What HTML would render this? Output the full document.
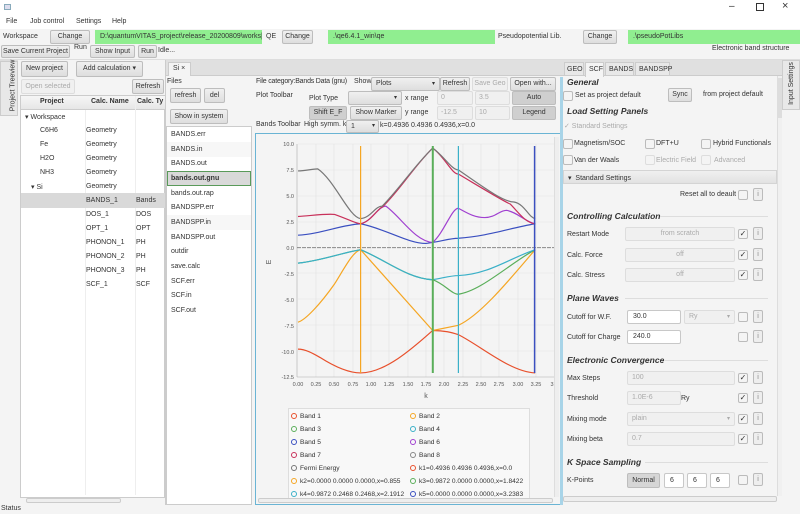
<!DOCTYPE html>
<html><head><meta charset="utf-8"><style>
*{box-sizing:border-box;margin:0;padding:0}
body{width:800px;height:514px;overflow:hidden;background:#f4f4f4;font-family:"Liberation Sans",sans-serif;font-size:7px;color:#333;position:relative}
.a{position:absolute;white-space:nowrap}
.b{position:absolute;background:linear-gradient(#f0f0f0,#dedede);border:1px solid #bdbdbd;border-radius:2px;text-align:center;white-space:nowrap;color:#333}
.g{position:absolute;background:#90ee90;padding-left:5px;white-space:nowrap}
.in{position:absolute;background:#fff;border:1px solid #c8c8c8;border-radius:2px;padding-left:5px;white-space:nowrap}
.dis{position:absolute;background:#f0f0f0;border:1px solid #ddd;border-radius:2px;color:#aaa;text-align:center;white-space:nowrap}
.cb{position:absolute;width:10px;height:10px;border:1px solid #bbb;border-radius:2px;background:#f4f4f4;font-size:8px;line-height:8px;text-align:center;color:#333}
.ib{position:absolute;width:10px;height:13px;border:1px solid #bbb;border-radius:2px;background:#eee;font-size:7px;line-height:11px;text-align:center;color:#888}
.h{position:absolute;font-weight:bold;font-style:italic;font-size:8.5px;color:#333;white-space:nowrap}
.hl{position:absolute;height:1px;background:#ddd}
.lg{position:absolute;white-space:nowrap;font-size:6.6px}
.lg i{display:inline-block;width:6px;height:6px;border:1.3px solid;border-radius:50%;margin-right:3px;vertical-align:-1px}
</style></head><body>
<div class="a" style="left:0;top:0;width:800px;height:16px;background:#fff"></div>
<div class="a" style="left:4px;top:4px;width:7px;height:6px;border:1px solid #8ab;background:#dde"></div>
<div class="a" style="left:729px;top:1px;font-size:10px;color:#333">–</div>
<div class="a" style="left:756px;top:3px;width:8px;height:8px;border:1px solid #333"></div>
<div class="a" style="left:782px;top:0px;font-size:11px;color:#333">×</div>
<div class="a" style="left:0;top:16px;width:800px;height:13px;background:#fff"></div>
<div class="a" style="left:6px;top:18px">File</div>
<div class="a" style="left:30px;top:18px">Job control</div>
<div class="a" style="left:76px;top:18px">Settings</div>
<div class="a" style="left:112px;top:18px">Help</div>
<div class="a" style="left:3px;top:33px">Workspace</div>
<div class="b" style="left:50px;top:30px;width:40px;height:14px;line-height:12px">Change</div>
<div class="g" style="left:95px;top:30px;width:167px;height:14px;line-height:14px;overflow:hidden">D:\quantumVITAS_project\release_20200809\works|</div>
<div class="a" style="left:266px;top:33px">QE</div>
<div class="b" style="left:282px;top:30px;width:31px;height:14px;line-height:12px">Change</div>
<div class="g" style="left:328px;top:30px;width:167px;height:14px;line-height:14px">.\qe6.4.1_win\qe</div>
<div class="a" style="left:498px;top:33px">Pseudopotential Lib.</div>
<div class="b" style="left:583px;top:30px;width:34px;height:14px;line-height:12px">Change</div>
<div class="g" style="left:628px;top:30px;width:172px;height:14px;line-height:14px">.\pseudoPotLibs</div>
<div class="b" style="left:1px;top:45px;width:69px;height:13px;line-height:11px">Save Current Project</div>
<div class="a" style="left:74px;top:44px">Run</div>
<div class="b" style="left:90px;top:45px;width:45px;height:13px;line-height:11px">Show Input</div>
<div class="b" style="left:138px;top:45px;width:19px;height:13px;line-height:11px">Run</div>
<div class="a" style="left:158px;top:47px">Idle...</div>
<div class="a" style="left:712px;top:45px">Electronic band structure</div>
<div class="a" style="left:0;top:59px;width:800px;height:2px;background:#ddd"></div>
<div class="a" style="left:0;top:61px;width:18px;height:55px;background:#e8e8e8;border:1px solid #ccc"></div>
<div class="a" style="left:-13px;top:82px;transform:rotate(-90deg);font-size:7px">Project Treeview</div>
<div class="a" style="left:18px;top:60px;width:148px;height:445px;background:#f4f4f4;border-right:1px solid #ccc"></div>
<div class="b" style="left:21px;top:61px;width:47px;height:16px;line-height:14px">New project</div>
<div class="b" style="left:76px;top:61px;width:67px;height:16px;line-height:14px">Add calculation ▾</div>
<div class="dis" style="left:21px;top:79px;width:54px;height:15px;line-height:13px">Open selected</div>
<div class="b" style="left:132px;top:79px;width:32px;height:15px;line-height:13px">Refresh</div>
<div class="a" style="left:20px;top:95px;width:145px;height:403px;background:#fff;border:1px solid #ccc"></div>
<div class="a" style="left:21px;top:96px;width:144px;height:14px;background:linear-gradient(#f6f6f6,#e6e6e6);border-bottom:1px solid #ccc"></div>
<div class="a" style="left:40px;top:98px;font-weight:bold">Project</div>
<div class="a" style="left:91px;top:98px;font-weight:bold">Calc. Name</div>
<div class="a" style="left:137px;top:98px;font-weight:bold">Calc. Ty</div>
<div class="a" style="left:85px;top:110px;width:1px;height:385px;background:#eee"></div>
<div class="a" style="left:135px;top:96px;width:1px;height:399px;background:#eee"></div>
<div class="a" style="left:21px;top:193px;width:144px;height:15px;background:#d9d9d9"></div>
<div class="a" style="left:25px;top:113px">▾ Workspace</div>
<div class="a" style="left:40px;top:127px">C6H6</div><div class="a" style="left:86px;top:127px">Geometry</div>
<div class="a" style="left:40px;top:141px">Fe</div><div class="a" style="left:86px;top:141px">Geometry</div>
<div class="a" style="left:40px;top:155px">H2O</div><div class="a" style="left:86px;top:155px">Geometry</div>
<div class="a" style="left:40px;top:169px">NH3</div><div class="a" style="left:86px;top:169px">Geometry</div>
<div class="a" style="left:31px;top:183px">▾ Si</div><div class="a" style="left:86px;top:183px">Geometry</div>
<div class="a" style="left:86px;top:197px">BANDS_1</div><div class="a" style="left:136px;top:197px">Bands</div>
<div class="a" style="left:86px;top:211px">DOS_1</div><div class="a" style="left:136px;top:211px">DOS</div>
<div class="a" style="left:86px;top:225px">OPT_1</div><div class="a" style="left:136px;top:225px">OPT</div>
<div class="a" style="left:86px;top:239px">PHONON_1</div><div class="a" style="left:136px;top:239px">PH</div>
<div class="a" style="left:86px;top:253px">PHONON_2</div><div class="a" style="left:136px;top:253px">PH</div>
<div class="a" style="left:86px;top:267px">PHONON_3</div><div class="a" style="left:136px;top:267px">PH</div>
<div class="a" style="left:86px;top:281px">SCF_1</div><div class="a" style="left:136px;top:281px">SCF</div>
<div class="a" style="left:26px;top:498px;width:95px;height:5px;border:1px solid #ccc;border-radius:2px;background:#eee"></div>
<div class="a" style="left:166px;top:60px;width:394px;height:16px;background:#e0e0e0;border-bottom:1px solid #ccc"></div>
<div class="a" style="left:168px;top:62px;width:23px;height:14px;background:#f4f4f4;border:1px solid #ccc;border-bottom:none;padding:2px 0 0 4px">Si ×</div>
<div class="a" style="left:167px;top:78px">Files</div>
<div class="b" style="left:170px;top:88px;width:31px;height:15px;line-height:13px">refresh</div>
<div class="b" style="left:204px;top:88px;width:21px;height:15px;line-height:13px">del</div>
<div class="b" style="left:170px;top:109px;width:58px;height:15px;line-height:13px">Show in system</div>
<div class="a" style="left:166px;top:126px;width:86px;height:379px;background:#fff;border:1px solid #ccc"></div>
<div class="a" style="left:171px;top:131px">BANDS.err</div>
<div class="a" style="left:167px;top:142px;width:84px;height:15px;background:#f7f7f7"></div>
<div class="a" style="left:171px;top:146px">BANDS.in</div>
<div class="a" style="left:171px;top:160px">BANDS.out</div>
<div class="a" style="left:167px;top:171px;width:84px;height:15px;background:#d9d9d9;border:1px solid #5a9a5a"></div>
<div class="a" style="left:171px;top:175px;font-weight:bold">bands.out.gnu</div>
<div class="a" style="left:171px;top:190px">bands.out.rap</div>
<div class="a" style="left:171px;top:204px">BANDSPP.err</div>
<div class="a" style="left:167px;top:215px;width:84px;height:15px;background:#f7f7f7"></div>
<div class="a" style="left:171px;top:219px">BANDSPP.in</div>
<div class="a" style="left:171px;top:234px">BANDSPP.out</div>
<div class="a" style="left:171px;top:248px">outdir</div>
<div class="a" style="left:171px;top:263px">save.calc</div>
<div class="a" style="left:171px;top:278px">SCF.err</div>
<div class="a" style="left:171px;top:292px">SCF.in</div>
<div class="a" style="left:171px;top:307px">SCF.out</div>
<div class="a" style="left:256px;top:78px;letter-spacing:-0.2px">File category:Bands Data (gnu)</div>
<div class="a" style="left:354px;top:78px">Show</div>
<div class="b" style="left:371px;top:77px;width:69px;height:14px;line-height:12px;text-align:left;padding-left:4px">Plots<span style="float:right;margin-right:4px;font-size:6px">▾</span></div>
<div class="b" style="left:440px;top:77px;width:30px;height:14px;line-height:12px">Refresh</div>
<div class="dis" style="left:472px;top:77px;width:36px;height:14px;line-height:12px">Save Geo</div>
<div class="b" style="left:510px;top:77px;width:46px;height:14px;line-height:12px">Open with...</div>
<div class="a" style="left:256px;top:92px">Plot Toolbar</div>
<div class="a" style="left:309px;top:95px">Plot Type</div>
<div class="b" style="left:348px;top:91px;width:54px;height:14px;line-height:12px;text-align:right;padding-right:4px;font-size:6px">▾</div>
<div class="a" style="left:405px;top:95px">x range</div>
<div class="dis" style="left:437px;top:91px;width:36px;height:14px;line-height:12px;text-align:left;padding-left:3px">0</div>
<div class="dis" style="left:475px;top:91px;width:35px;height:14px;line-height:12px;text-align:left;padding-left:3px">3.5</div>
<div class="b" style="left:512px;top:91px;width:44px;height:14px;line-height:12px;background:#cfcfcf">Auto</div>
<div class="b" style="left:309px;top:106px;width:38px;height:14px;line-height:12px;background:#cfcfcf">Shift E_F</div>
<div class="b" style="left:350px;top:106px;width:52px;height:14px;line-height:12px">Show Marker</div>
<div class="a" style="left:405px;top:109px">y range</div>
<div class="dis" style="left:437px;top:106px;width:36px;height:14px;line-height:12px;text-align:left;padding-left:3px">-12.5</div>
<div class="dis" style="left:475px;top:106px;width:35px;height:14px;line-height:12px;text-align:left;padding-left:3px">10</div>
<div class="b" style="left:512px;top:106px;width:44px;height:14px;line-height:12px;background:#cfcfcf">Legend</div>
<div class="a" style="left:256px;top:121px">Bands Toolbar</div>
<div class="a" style="left:304px;top:121px">High symm. k</div>
<div class="b" style="left:346px;top:120px;width:33px;height:13px;line-height:11px;text-align:left;padding-left:4px">1<span style="float:right;margin-right:3px;font-size:6px">▾</span></div>
<div class="a" style="left:380px;top:122px">k=0.4936 0.4936 0.4936,x=0.0</div>
<div class="a" style="left:255px;top:133px;width:306px;height:372px;background:#f4f4f4;border:1px solid #6ab4d4"></div>
<svg class="a" style="left:0;top:0" width="800" height="514">
<g stroke="#e2e2e2" stroke-width="0.6">
<line x1="298" y1="144" x2="555" y2="144"/><line x1="298" y1="170" x2="555" y2="170"/><line x1="298" y1="196" x2="555" y2="196"/><line x1="298" y1="222" x2="555" y2="222"/><line x1="298" y1="273" x2="555" y2="273"/><line x1="298" y1="299" x2="555" y2="299"/><line x1="298" y1="325" x2="555" y2="325"/><line x1="298" y1="351" x2="555" y2="351"/>
<line x1="316" y1="144" x2="316" y2="377"/><line x1="334" y1="144" x2="334" y2="377"/><line x1="353" y1="144" x2="353" y2="377"/><line x1="371" y1="144" x2="371" y2="377"/><line x1="389" y1="144" x2="389" y2="377"/><line x1="408" y1="144" x2="408" y2="377"/><line x1="426" y1="144" x2="426" y2="377"/><line x1="444" y1="144" x2="444" y2="377"/><line x1="463" y1="144" x2="463" y2="377"/><line x1="481" y1="144" x2="481" y2="377"/><line x1="499" y1="144" x2="499" y2="377"/><line x1="518" y1="144" x2="518" y2="377"/><line x1="536" y1="144" x2="536" y2="377"/>
</g>
<line x1="297" y1="144" x2="297" y2="377" stroke="#aaa" stroke-width="0.6"/>
<line x1="297" y1="377" x2="555" y2="377" stroke="#aaa" stroke-width="0.6"/>
<g font-size="5.5" fill="#555" font-family="Liberation Sans" text-anchor="end">
<text x="294" y="146">10.0</text><text x="294" y="172">7.5</text><text x="294" y="198">5.0</text><text x="294" y="224">2.5</text><text x="294" y="250">0.0</text><text x="294" y="276">-2.5</text><text x="294" y="302">-5.0</text><text x="294" y="328">-7.5</text><text x="294" y="354">-10.0</text><text x="294" y="379">-12.5</text>
</g>
<g font-size="5.5" fill="#555" font-family="Liberation Sans" text-anchor="middle">
<text x="298" y="386">0.00</text><text x="316" y="386">0.25</text><text x="334" y="386">0.50</text><text x="353" y="386">0.75</text><text x="371" y="386">1.00</text><text x="389" y="386">1.25</text><text x="408" y="386">1.50</text><text x="426" y="386">1.75</text><text x="444" y="386">2.00</text><text x="463" y="386">2.25</text><text x="481" y="386">2.50</text><text x="499" y="386">2.75</text><text x="518" y="386">3.00</text><text x="536" y="386">3.25</text><text x="552" y="386">3</text>
<text x="426" y="398" font-size="7">k</text>
<text x="271" y="262" font-size="7" transform="rotate(-90 271 262)">E</text>
</g>
<line x1="297" y1="247.6" x2="555" y2="247.6" stroke="#888" stroke-width="1" stroke-dasharray="4 1"/>
<g fill="none" stroke-width="1.2" stroke-linejoin="round" transform="translate(298 247.6) scale(73.2 -10.36)">
<path vector-effect="non-scaling-stroke" stroke="#e8502c" d="M0-9.8 C.1-9.8 .2-10.2 .3-10.6 C.5-11.5 .7-12.1 .855-12.1 C1.2-12.1 1.6-9.5 1.84-8.0 C2.0-8.0 2.1-8.2 2.19-8.4 C2.5-9.5 2.9-12.0 3.24-12.1"/>
<path vector-effect="non-scaling-stroke" stroke="#f5a623" d="M0-7.2 C.1-7.0 .3-5.5 .5-3.5 C.65-1.8 .75-.4 .855-.2 L1.84-8.0 L2.19-7.5 C2.5-6.5 2.9-3 3.24-.2"/>
<path vector-effect="non-scaling-stroke" stroke="#5aae5a" d="M0-1.5 C.3-1.3 .6-.5 .855-.2 C1.2-1.2 1.5-3 1.84-3.1 C2.0-3.5 2.1-4.5 2.19-4.5 C2.5-4.2 2.9-1.5 3.24-.2"/>
<path vector-effect="non-scaling-stroke" stroke="#3ab0c8" d="M0-1.5 C.3-1.3 .6-.5 .855-.2 C1.2-1.2 1.5-3 1.84-3.1 C2.0-2.9 2.1-2.7 2.19-2.7 C2.6-2.6 2.9-1 3.24-.2"/>
<path vector-effect="non-scaling-stroke" stroke="#3a4fc0" d="M0 1.2 C.3 1.3 .6 2.2 .855 2.3 C1.2 1.8 1.5.4 1.75.4 L1.84.5 C2.0.7 2.1.9 2.19.9 C2.6 1.1 2.9 1.9 3.24 2.3"/>
<path vector-effect="non-scaling-stroke" stroke="#a040d0" d="M.855 2.3 C1.0 2.5 1.1 4.0 1.2 4.0 C1.4 3 1.6 .6 1.84.5 C2.0 1.5 2.1 3.8 2.19 3.8 C2.3 3.4 2.4 2.9 2.55 2.9 C2.7 2.9 2.75 3.6 2.85 3.6 C3 3.4 3.1 2.5 3.24 2.3"/>
<path vector-effect="non-scaling-stroke" stroke="#c8305a" d="M0 3.0 C.2 3.1 .4 3.3 .5 3.2 C.7 2.7 .8 2.3 .855 2.3 C1.0 2.5 1.1 3.9 1.15 3.9 C1.4 5.6 1.6 8 1.84 9.6 C2.0 8.8 2.1 7.1 2.19 7.1 C2.5 5.8 2.8 4.5 2.9 4.2 C3.0 3.5 3.1 2.4 3.24 2.3"/>
<path vector-effect="non-scaling-stroke" stroke="#777" d="M0 7.4 C.1 7.4 .2 7.6 .27 7.6 C.5 6.5 .7 2.9 .855 2.8 C1.0 2.9 1.05 4.0 1.15 4.0 C1.4 5.8 1.6 8 1.84 9.6 C2.0 8.8 2.1 7.5 2.19 7.5 C2.5 6 2.8 4.4 2.95 4.4 C3.1 4.2 3.15 2.9 3.24 2.8"/>
</g>
<line x1="360.6" y1="146" x2="360.6" y2="373" stroke="#f5a623" stroke-width="1.2"/>
<line x1="432.8" y1="146" x2="432.8" y2="373" stroke="#5aae5a" stroke-width="2"/>
<line x1="458.4" y1="146" x2="458.4" y2="373" stroke="#3ab0c8" stroke-width="1.2"/>
<line x1="534.6" y1="146" x2="534.6" y2="373" stroke="#3a4fc0" stroke-width="1.5"/>
</svg>
<div class="a" style="left:288px;top:408px;width:242px;height:93px;background:#f8f8f8;border:1px solid #ddd"></div>
<div class="lg" style="left:291px;top:413px"><i style="border-color:#e8502c"></i>Band 1</div>
<div class="lg" style="left:410px;top:413px"><i style="border-color:#f5a623"></i>Band 2</div>
<div class="lg" style="left:291px;top:426px"><i style="border-color:#5aae5a"></i>Band 3</div>
<div class="lg" style="left:410px;top:426px"><i style="border-color:#3ab0c8"></i>Band 4</div>
<div class="lg" style="left:291px;top:439px"><i style="border-color:#3a4fc0"></i>Band 5</div>
<div class="lg" style="left:410px;top:439px"><i style="border-color:#a040d0"></i>Band 6</div>
<div class="lg" style="left:291px;top:452px"><i style="border-color:#c8305a"></i>Band 7</div>
<div class="lg" style="left:410px;top:452px"><i style="border-color:#888"></i>Band 8</div>
<div class="lg" style="left:291px;top:465px"><i style="border-color:#777"></i>Fermi Energy</div>
<div class="lg" style="left:410px;top:465px"><i style="border-color:#e8502c"></i>k1=0.4936 0.4936 0.4936,x=0.0</div>
<div class="lg" style="left:291px;top:478px"><i style="border-color:#f5a623"></i>k2=0.0000 0.0000 0.0000,x=0.855</div>
<div class="lg" style="left:410px;top:478px"><i style="border-color:#5aae5a"></i>k3=0.9872 0.0000 0.0000,x=1.8422</div>
<div class="lg" style="left:291px;top:491px"><i style="border-color:#3ab0c8"></i>k4=0.9872 0.2468 0.2468,x=2.1912</div>
<div class="lg" style="left:410px;top:491px"><i style="border-color:#3a4fc0"></i>k5=0.0000 0.0000 0.0000,x=3.2383</div>
<div class="a" style="left:258px;top:498px;width:295px;height:5px;border:1px solid #ccc;border-radius:2px;background:#eee"></div>
<div class="a" style="left:554px;top:137px;width:5px;height:360px;background:#eee;border-left:1px solid #ddd"></div>
<div class="a" style="left:560px;top:60px;width:222px;height:16px;background:#e0e0e0;border-bottom:1px solid #ccc"></div>
<div class="a" style="left:564px;top:62px;width:20px;height:14px;background:#e8e8e8;border:1px solid #ccc;padding:3px 0 0 2px">GEO</div>
<div class="a" style="left:585px;top:62px;width:19px;height:15px;background:#f4f4f4;border:1px solid #ccc;border-bottom:none;padding:3px 0 0 3px">SCF</div>
<div class="a" style="left:605px;top:62px;width:29px;height:14px;background:#e8e8e8;border:1px solid #ccc;padding:3px 0 0 3px">BANDS</div>
<div class="a" style="left:635px;top:62px;width:35px;height:14px;background:#e8e8e8;border:1px solid #ccc;padding:3px 0 0 3px">BANDSPP</div>
<div class="a" style="left:560px;top:77px;width:3px;height:428px;background:#a8d4e8"></div>
<div class="a" style="left:777px;top:76px;width:5px;height:420px;background:#f0f0f0;border-left:1px solid #ddd"></div>
<div class="a" style="left:777px;top:78px;width:5px;height:40px;background:#ddd"></div>
<div class="a" style="left:782px;top:60px;width:18px;height:50px;background:#e8e8e8;border:1px solid #ccc"></div>
<div class="a" style="left:770px;top:80px;transform:rotate(-90deg);font-size:7px">Input Settings</div>
<div class="h" style="left:567px;top:77px">General</div>
<div class="cb" style="left:563px;top:91px"></div>
<div class="a" style="left:575px;top:92px">Set as project default</div>
<div class="b" style="left:668px;top:88px;width:24px;height:14px;line-height:12px">Sync</div>
<div class="a" style="left:703px;top:91px">from project default</div>
<div class="h" style="left:567px;top:106px">Load Setting Panels</div>
<div class="a" style="left:564px;top:122px;color:#aaa">✓ Standard Settings</div>
<div class="cb" style="left:563px;top:139px"></div><div class="a" style="left:574px;top:140px">Magnetism/SOC</div>
<div class="cb" style="left:645px;top:139px"></div><div class="a" style="left:656px;top:140px">DFT+U</div>
<div class="cb" style="left:701px;top:139px"></div><div class="a" style="left:713px;top:140px">Hybrid Functionals</div>
<div class="cb" style="left:563px;top:155px"></div><div class="a" style="left:574px;top:157px">Van der Waals</div>
<div class="cb" style="left:645px;top:155px;border-color:#ddd"></div><div class="a" style="left:656px;top:157px;color:#aaa">Electric Field</div>
<div class="cb" style="left:701px;top:155px;border-color:#ddd"></div><div class="a" style="left:714px;top:157px;color:#aaa">Advanced</div>
<div class="a" style="left:563px;top:170px;width:214px;height:14px;background:linear-gradient(#f0f0f0,#e2e2e2);border:1px solid #d4d4d4;padding:3px 0 0 4px">▾ &nbsp;Standard Settings</div>
<div class="a" style="left:680px;top:191px">Reset all to deault</div>
<div class="cb" style="left:738px;top:190px"></div><div class="ib" style="left:753px;top:188px">i</div>
<div class="h" style="left:567px;top:211px">Controlling Calculation</div><div class="hl" style="left:660px;top:216px;width:108px"></div>
<div class="a" style="left:567px;top:231px">Restart Mode</div>
<div class="dis" style="left:625px;top:227px;width:110px;height:14px;line-height:12px">from scratch</div>
<div class="cb" style="left:738px;top:229px">✓</div><div class="ib" style="left:753px;top:227px">i</div>
<div class="a" style="left:567px;top:252px">Calc. Force</div>
<div class="dis" style="left:625px;top:248px;width:110px;height:14px;line-height:12px">off</div>
<div class="cb" style="left:738px;top:250px">✓</div><div class="ib" style="left:753px;top:248px">i</div>
<div class="a" style="left:567px;top:272px">Calc. Stress</div>
<div class="dis" style="left:625px;top:268px;width:110px;height:14px;line-height:12px">off</div>
<div class="cb" style="left:738px;top:270px">✓</div><div class="ib" style="left:753px;top:268px">i</div>
<div class="h" style="left:567px;top:293px">Plane Waves</div><div class="hl" style="left:625px;top:298px;width:143px"></div>
<div class="a" style="left:567px;top:314px">Cutoff for W.F.</div>
<div class="in" style="left:627px;top:310px;width:54px;height:14px;line-height:12px">30.0</div>
<div class="dis" style="left:684px;top:310px;width:51px;height:14px;line-height:12px;text-align:left;padding-left:4px">Ry<span style="float:right;margin-right:4px;font-size:6px">▾</span></div>
<div class="cb" style="left:738px;top:312px"></div><div class="ib" style="left:753px;top:310px">i</div>
<div class="a" style="left:567px;top:334px">Cutoff for Charge</div>
<div class="in" style="left:627px;top:330px;width:54px;height:14px;line-height:12px">240.0</div>
<div class="cb" style="left:738px;top:332px"></div><div class="ib" style="left:753px;top:330px">i</div>
<div class="h" style="left:567px;top:355px">Electronic Convergence</div><div class="hl" style="left:665px;top:360px;width:103px"></div>
<div class="a" style="left:567px;top:375px">Max Steps</div>
<div class="dis" style="left:627px;top:371px;width:108px;height:14px;line-height:12px;text-align:left;padding-left:4px">100</div>
<div class="cb" style="left:738px;top:373px">✓</div><div class="ib" style="left:753px;top:371px">i</div>
<div class="a" style="left:567px;top:395px">Threshold</div>
<div class="dis" style="left:627px;top:391px;width:54px;height:14px;line-height:12px;text-align:left;padding-left:4px">1.0E-6</div>
<div class="a" style="left:681px;top:395px">Ry</div>
<div class="cb" style="left:738px;top:393px">✓</div><div class="ib" style="left:753px;top:391px">i</div>
<div class="a" style="left:567px;top:416px">Mixing mode</div>
<div class="dis" style="left:627px;top:412px;width:108px;height:14px;line-height:12px;text-align:left;padding-left:4px">plain<span style="float:right;margin-right:4px;font-size:6px">▾</span></div>
<div class="cb" style="left:738px;top:414px">✓</div><div class="ib" style="left:753px;top:412px">i</div>
<div class="a" style="left:567px;top:436px">Mixing beta</div>
<div class="dis" style="left:627px;top:432px;width:108px;height:14px;line-height:12px;text-align:left;padding-left:4px">0.7</div>
<div class="cb" style="left:738px;top:434px">✓</div><div class="ib" style="left:753px;top:432px">i</div>
<div class="h" style="left:567px;top:457px">K Space Sampling</div><div class="hl" style="left:645px;top:462px;width:123px"></div>
<div class="a" style="left:567px;top:477px">K-Points</div>
<div class="b" style="left:627px;top:473px;width:33px;height:15px;line-height:13px;background:#d6d6d6">Normal</div>
<div class="in" style="left:664px;top:473px;width:20px;height:15px;line-height:13px">6</div>
<div class="in" style="left:687px;top:473px;width:20px;height:15px;line-height:13px">6</div>
<div class="in" style="left:710px;top:473px;width:20px;height:15px;line-height:13px">6</div>
<div class="cb" style="left:738px;top:475px"></div><div class="ib" style="left:753px;top:473px">i</div>
<div class="a" style="left:563px;top:496px;width:214px;height:6px;border:1px solid #ccc;border-radius:2px;background:#eee"></div>
<div class="a" style="left:1px;top:505px">Status</div>
</body></html>
